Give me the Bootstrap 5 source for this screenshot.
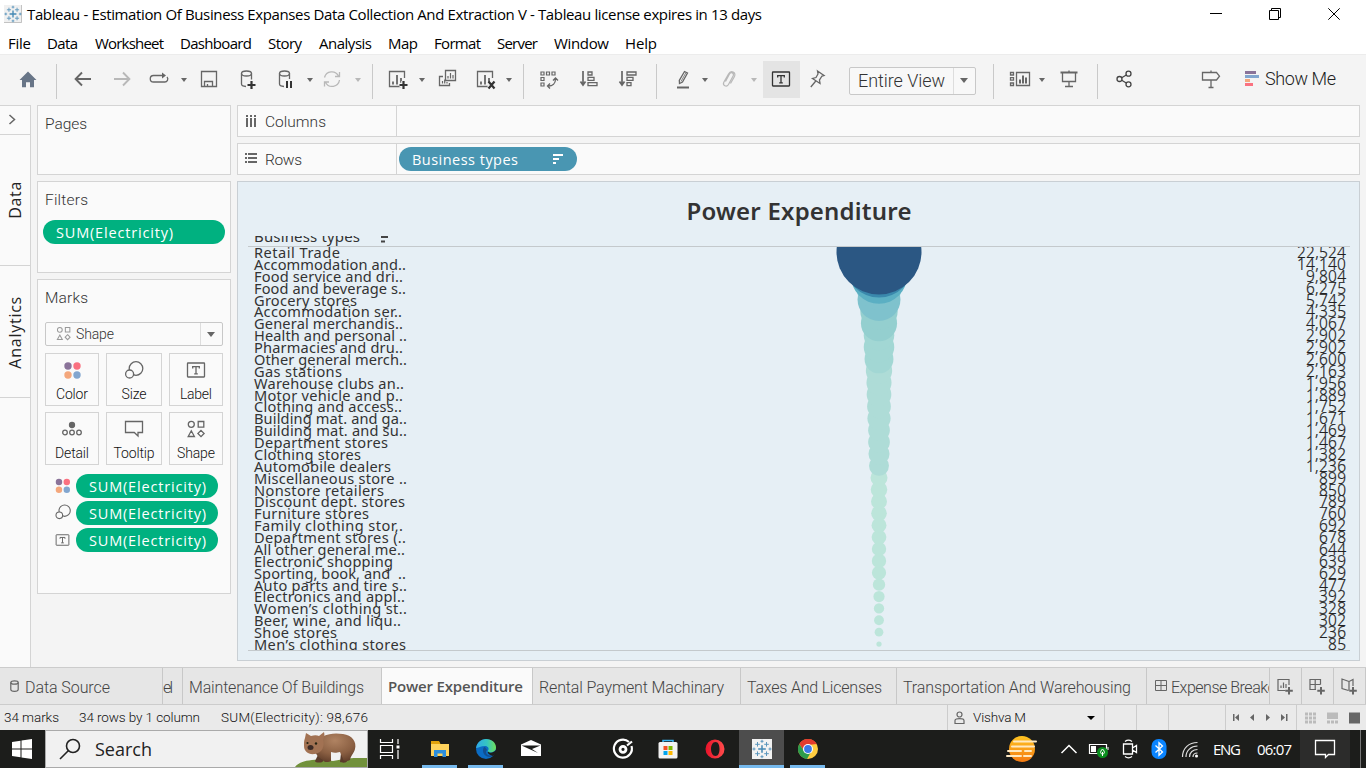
<!DOCTYPE html>
<html lang="en">
<head>
<meta charset="utf-8">
<meta name="viewport" content="width=device-width, initial-scale=1">
<title>Tableau - Power Expenditure</title>
<link href="https://cdn.jsdelivr.net/npm/bootstrap@5.3.0/dist/css/bootstrap.min.css" rel="stylesheet">
<style>
  :root { --line:#d4d4d4; --ink:#555; --ui:Roboto,"Open Sans",sans-serif; --win:"Open Sans","Noto Sans",sans-serif; }
  html, body { height:100%; overflow:hidden; }
  body { width:1366px; height:768px; background:#f4f4f4; font-family:var(--ui); color:#333; font-size:15px; line-height:1; }
  svg { display:block; flex:none; }
  [data-w] { white-space:nowrap; display:inline-block; }
  .ic { width:24px; height:24px; fill:none; stroke:#666; stroke-width:1.3; }
  .ic.off { stroke:#b8b8b8; }
  .caret { width:0; height:0; border:3px solid transparent; border-top:4px solid #666; border-bottom:0; }
  .caret.off { border-top-color:#b8b8b8; }
  .caret.wide { border-width:5px 4px 0; margin-left:6px; }

  .title-bar { height:28px; background:#fff; font:15px/28px var(--win); color:#000; padding:0 26px 0 4px; }
  .title-bar .win-btns { gap:47px; }
  .title-bar .win { width:12px; height:12px; stroke:#000; fill:none; }
  .title-bar .caption-text { margin-left:5px; }
  .menu-bar { height:26px; background:#fff; font:15px/30px var(--win); color:#000; display:grid; padding-left:8px; align-items:center; justify-items:start;
    grid-template-columns:39px 48px 85px 88px 51px 69px 46px 63px 57px 71px 60px; }
  .tools { height:51px; border-top:1px solid #ececec; display:grid; align-items:center; justify-items:end;
    grid-template-columns:40px 17px 38px 39px 37px 16px 34px 39px 37px 16px 31px 17px 12px 36px 16px 34px 38px 15px 12px 37px 40px 39px 17px 38px 13px 33px 16px 43px 29px 147px 18px 37px 14px 36px 17px 38px 87px 113px; }
  .tools > .ic { margin-bottom:2px; }
  .rule { width:1px; height:35px; background:#c9c9c9; margin-top:2px; }
  .toggled { width:37px; height:37px; background:#e4e4e4; margin-bottom:1px; }
  .toggled .ic { stroke:#333; margin:0 1px 1px 0; }
  .fit-box { width:127px; height:28px; border:1px solid #c8c8c8; border-radius:2px; background:#f8f8f8; font-size:18px; color:#333; font-weight:300; margin-top:1px; }
  .fit-box > span:first-child { width:104px; padding-left:8px; border-right:1px solid #ddd; height:100%; line-height:25px; }
  .show-me { font-size:18px; color:#222; font-weight:300; margin-bottom:2px; }

  .work { height:562px; }
  .side-tabs { width:31px; background:#fafafa; border:1px solid var(--line); border-left:0; border-bottom:0; font-family:var(--win); font-size:16px; color:#222; }
  .side-tabs > div { border-bottom:1px solid var(--line); height:132px; }
  .side-tabs > .toggle { height:29px; }
  .side-tabs > .data-tab { height:131px; }
  .side-tabs span { writing-mode:vertical-rl; transform:rotate(180deg); line-height:20px; }
  .panel { background:#fafafa; border:1px solid var(--line); }
  .shelves { width:194px; margin-left:6px; gap:6px; }
  .shelves h2, .shelf h2 { font-size:15.5px; font-weight:300; color:#333; margin:0; line-height:18px; }
  .shelf h2 { padding-top:2px; }
  .shelves h2 { padding:9px 7px 0; }
  .pages { height:70px; } .filters { height:92px; } .marks { height:315px; }
  .pill { height:24px; border-radius:12px; background:#00b180; color:#fff; font-family:var(--win); font-size:14.5px; font-weight:500; line-height:25px; padding-left:13px; }
  .filters .pill { margin:11px 5px 0; }
  .mark-type { height:24px; border:1px solid #c8c8c8; border-radius:2px; margin:15px 7px 0; font-size:14px; font-weight:300; }
  .mark-type > div { width:155px; border-right:1px solid #ddd; }
  .mark-type .ic { width:30px; stroke:#999; }
  .mark-grid { display:grid; grid-template-columns:54px 56px 54px; column-gap:7px; row-gap:6px; margin:7px 7px 0; }
  .mark-grid > div { height:53px; border:1px solid var(--line); font-size:14px; font-weight:300; color:#111; padding-top:4px; }
  .mark-grid [data-w] { margin-top:5px; }
  .encodings { padding:9px 12px 0 13px; gap:3px; }
  .encodings .pill { width:142px; }
  .encodings .ic { margin-right:1px; }
  .canvas-col { width:1123px; margin-left:6px; gap:6px; }
  .shelf { height:32px; }
  .shelf .cap { width:159px; border-right:1px solid var(--line); padding-left:7px; gap:8px; }
  .shelf .pill { background:#4996b2; width:178px; margin-left:2px; margin-top:3px; padding-right:13px; }
  .sheet { height:480px; background:#e6eff5; border-color:#c9cfd4; font-family:"Noto Sans","Open Sans",sans-serif; padding:0 9px 0 10px; }
  .sheet h1 { font-size:24px; font-weight:600; color:#333; height:54px; line-height:58px; margin:0; }
  .field-head { height:11px; overflow:hidden; border-bottom:1px solid #c4c9cc; font-size:15px; padding-left:6px; }
  .field-head span { line-height:16px; margin-top:-8px; }
  .field-head svg { margin-left:20px; }
  .plot { height:404px; overflow:hidden; position:relative; border-bottom:1px solid #c4c9cc; font-size:14.6px; }
  .plot .line { height:11.88px; line-height:11.88px; padding:0 4px 0 6px; white-space:pre; }
  .plot .line span { white-space:pre; }
  .plot .amount { color:#222; font-size:15.500px; font-weight:300; -webkit-text-stroke:.2px #222; }
  .plot svg { position:absolute; left:530.5px; top:0; }

  .tabs { height:38px; background:#e6e6e6; border-top:1px solid #ccc; border-bottom:1px solid #ccc; color:#444; font-weight:300; font-size:16px; }
  .tabs > div { display:flex; align-items:center; border-right:1px solid #c8c8c8; overflow:hidden; padding-left:6px; }
  .tabs > div > span { padding-top:3px; }
  .tabs > .add { width:32px; padding-left:3px; }
  .tabs .on { background:#fafafa; font-weight:600; color:#555; width:151px; font-family:var(--win); font-size:15px; }
  .tabs .on > span { padding-top:0; }
  .t-source { width:163px; } .tabs > .t-source { padding-left:10px; } .t-cut { width:20px; } .tabs > .t-cut { padding-left:0; }
  .t-build { width:199px; } .t-rent { width:208px; } .t-tax { width:156px; } .t-trans { width:250px; } .t-exp { width:123px; } .tabs > .t-exp { padding-left:8px; }
  .status { height:25px; background:#eaeaea; font-size:13.500px; color:#111; font-weight:300; display:grid; grid-template-columns:75px 142px 722px 157px 32px 32px 57px 71px 70px; padding-left:4px; }
  .status { grid-template-columns:75px 142px 726px 157px 32px 32px 57px 71px 70px; }
  .status > div { display:flex; align-items:center; }
  .status .box { border-left:1px solid #ccc; }
  .status .caret { border-width:4px 4px 0; border-top-color:#000; margin-right:9px; }
  .taskbar { height:38px; background:#1c1d1b; color:#fff; font-family:var(--win); font-size:15px; display:grid; justify-items:end; align-items:center;
    grid-template-columns:45px 323px 34px 55px 46px 40px 92px 45px 47px 57px 41px 212px 42px 31px 30px 27px 33px 41px 51px 58px 11px; grid-template-rows:38px; }
  .start { width:45px; padding-left:12px; }
  .taskbar .find { width:323px; height:38px; background:#f1f1f1; border:1px solid #aaa; color:#222; font-size:18px; padding-left:13px; }
  .find span { margin-left:14px; }
  .app { width:35px; height:38px; border-bottom:3px solid #76b9ed; padding-top:9px; }
  .app.active { width:45px; background:#4d4d4d; }
  .notify { width:50px; height:38px; background:#2c2c2b; }
  .peek { width:1px; height:38px; background:#777; }
</style>
</head>
<body>
<svg width="0" height="0" class="position-absolute">
  <defs>
    <g id="dots" stroke="none"><circle cx="8" cy="8" r="3.700" fill="#8a7399"/><circle cx="17" cy="8" r="3.700" fill="#fa7180"/><circle cx="8" cy="17" r="3.700" fill="#f4a77c"/><circle cx="17" cy="17" r="3.700" fill="#82a6cf"/></g>
    <g id="sizes"><circle cx="14" cy="10.500" r="6.800"/><circle cx="7.600" cy="16" r="4" fill="#fafafa"/></g>
    <g id="tbox"><rect x="3.500" y="5" width="17" height="14" rx=".5"/><path d="M8.700 10.400V8.600h6.600v1.800M12 8.600v7.200M10.200 15.800h3.600" stroke-width="1.300"/></g>
    <g id="shapes"><circle cx="7.300" cy="7.300" r="3"/><path d="M14.200 4.500h5.600v5.600h-5.600zM4.200 19.500l3.100-5.700 3.100 5.700zM17 13.400l3.100 3.100-3.100 3.100-3.100-3.100z"/></g>
    <g id="logo" fill="none"><path d="M10 6.200v7.600M6.200 10h7.600" stroke="#4488b4" stroke-width="1.500"/><path d="M5.500 3v4.600M3.200 5.300h4.600M14.500 3v4.600M12.200 5.300h4.600M5.500 12.400V17M3.200 14.700h4.600M14.500 12.400V17M12.200 14.700h4.600M10 .8v3M8.500 2.300h3M10 16.200v3M8.500 17.700h3M2 8.500v3M.5 10h3M18 8.500v3M16.500 10h3" stroke="#5b96bd" stroke-width="1"/></g>
    <g id="bars"><path d="M19.500 11V4.500h-15v15h13"/><path d="M8 17.500v-3M12 17.500V8M16 17.500V11" stroke-width="1.800"/></g>
  </defs>
</svg>

<header>
  <div class="title-bar d-flex align-items-center">
    <svg width="18" height="18" viewBox="0 0 20 20"><rect width="20" height="20" fill="#f0f0f0"/><path d="M0 19.500h19.500V0" stroke="#bbb" fill="none"/><use href="#logo"/></svg>
    <span class="caption-text" data-w="735">Tableau - Estimation Of Business Expanses Data Collection And Extraction V - Tableau license expires in 13 days</span>
    <div class="d-flex ms-auto win-btns">
      <svg class="win" viewBox="0 0 12 12"><path d="M0 5.500h12"/></svg>
      <svg class="win" viewBox="0 0 12 12"><path d="M.5 2.500h9v9h-9zM2.500 2.500v-2h9v9h-2"/></svg>
      <svg class="win" viewBox="0 0 12 12"><path d="M.3.3l11.400 11.400M11.700.3L.3 11.700"/></svg>
    </div>
  </div>
  <nav class="menu-bar">
    <span data-w="23">File</span><span data-w="31">Data</span><span data-w="69">Worksheet</span><span data-w="72">Dashboard</span><span data-w="34">Story</span><span data-w="53">Analysis</span><span data-w="30">Map</span><span data-w="47">Format</span><span data-w="41">Server</span><span data-w="55">Window</span><span data-w="32">Help</span>
  </nav>
  <div class="tools">
    <svg class="ic" viewBox="0 0 24 24"><path d="M12 4.500L20.500 13H18v7.200h-4v-5h-4v5H6V13H3.500z" fill="#687587" stroke="none"/></svg>
    <i class="rule"></i>
    <svg class="ic" viewBox="0 0 24 24"><path d="M20 12H5M11 5.500L4.600 12l6.400 6.500" stroke-width="1.900"/></svg>
    <svg class="ic off" viewBox="0 0 24 24"><path d="M4 12h15M13 5.500l6.400 6.500-6.400 6.500" stroke-width="1.900"/></svg>
    <svg class="ic" viewBox="0 0 24 24"><path d="M16 8.500H6.500a3 3 0 000 6.500h11a3 3 0 002.500-5"/><path d="M15 5.500l4 3-4 3z" fill="#666" stroke="none"/></svg>
    <i class="caret"></i>
    <svg class="ic" viewBox="0 0 24 24"><path d="M4.500 4.500h15v15h-15zM7.500 19.500v-5h8v5M10.500 19v-2"/></svg>
    <svg class="ic" viewBox="0 0 24 24"><ellipse cx="10.500" cy="6.500" rx="5" ry="2.500"/><path d="M5.500 6.500V17c0 1.400 2 2.300 4.500 2.500M15.500 6.500v6"/><path d="M15.500 14v8M11.500 18h8" stroke="#333" stroke-width="2.200"/></svg>
    <svg class="ic" viewBox="0 0 24 24"><ellipse cx="11.500" cy="6.500" rx="5" ry="2.500"/><path d="M6.500 6.500V17c0 1.400 2 2.300 4.500 2.500M16.500 6.500V12"/><path d="M14 14v7M18 14v7" stroke="#333" stroke-width="2"/></svg>
    <i class="caret"></i>
    <svg class="ic off" viewBox="0 0 24 24"><path d="M4.500 10.500a7.500 7.500 0 0114-1.500M19.500 13a7.500 7.500 0 01-14 2.500M19.500 5v4.500H15M4.500 19.500V15H9"/></svg>
    <i class="caret off"></i><i class="rule"></i>
    <svg class="ic" viewBox="0 0 24 24"><use href="#bars"/><path d="M18.500 14v8M14.500 18h8" stroke="#f4f4f4" stroke-width="4.500"/><path d="M18.500 14v8M14.500 18h8" stroke="#333" stroke-width="2.200"/></svg>
    <i class="caret"></i>
    <svg class="ic" viewBox="0 0 24 24"><path d="M10.500 3.500h10v10h-10zM8 9.500H4.500v9h10V16"/><path d="M13 11.500V9M15.500 11.500V6M18 11.500V8M7.500 16.500V14M9.700 16.500v-4M12 16.500V15" stroke-width="1.200"/></svg>
    <svg class="ic" viewBox="0 0 24 24"><use href="#bars"/><path d="M16 15l6 6M22 15l-6 6" stroke="#f4f4f4" stroke-width="5"/><path d="M15.500 14.500l6 7M21.500 14.500l-6 7" stroke="#333" stroke-width="2.200"/></svg>
    <i class="caret"></i><i class="rule"></i>
    <svg class="ic" viewBox="0 0 24 24"><path d="M4 5h3v3H4zM9.500 5h3v3h-3zM15 5h3v3h-3zM4 10.500h3v3H4zM4 16h3v3H4z" stroke-width="1.200"/><path d="M18.500 12c0 4.500-3 7-7 7M16 13.500l2.500-2.500 2.500 2.500M13 16.500L10.500 19l2.500 2.500"/></svg>
    <svg class="ic" viewBox="0 0 24 24"><path d="M6 4v13M3.500 14.500L6 18l2.500-3.500" stroke-width="1.700"/><path d="M11 5h4v3h-4zM11 10.300h6v3h-6zM11 15.600h9v3h-9z"/></svg>
    <svg class="ic" viewBox="0 0 24 24"><path d="M6 4v13M3.500 14.500L6 18l2.500-3.500" stroke-width="1.700"/><path d="M11 5h9v3h-9zM11 10.300h6v3h-6zM11 15.600h4v3h-4z"/></svg>
    <i class="rule"></i>
    <svg class="ic" viewBox="0 0 24 24"><path d="M13.500 4.500l3 1.500-5 9-3 1.500-.2-3z"/><path d="M10 14.500l5-9" stroke-width=".8"/><path d="M6 20.500h12" stroke-width="2"/></svg>
    <i class="caret"></i>
    <svg class="ic off" viewBox="0 0 24 24"><path d="M8.500 14.500l4-7.500c1.600-2.700 5-1 3.600 2l-4.600 8.500c-2 3.300-6.200 1-4.700-2.300L11.500 7c2.500-4.500 8-1.500 6 2.500l-4 7" stroke-width="1.200"/></svg>
    <i class="caret off"></i>
    <div class="toggled d-flex align-items-center justify-content-center"><svg class="ic" viewBox="0 0 24 24"><use href="#tbox"/></svg></div>
    <svg class="ic" viewBox="0 0 24 24"><path d="M12.500 4l6.500 4.500-2 .5-2.500 4 .5 3.500-7.500-5 3.500-1 2-3.500zM10.800 14l-5 6"/></svg>
    <div class="fit-box d-flex align-items-center"><span><span data-w="87">Entire View</span></span><i class="caret wide"></i></div>
    <i class="rule"></i>
    <svg class="ic" viewBox="0 0 24 24"><path d="M9.500 5.500h13v13h-13zM3.500 5.500h3V8h-3zM3.500 10.700h3v2.500h-3zM3.500 16h3v2.500h-3z"/><path d="M13 16.500v-4M16 16.500v-8M19 16.500v-6" stroke-width="2"/></svg>
    <i class="caret"></i>
    <svg class="ic" viewBox="0 0 24 24"><path d="M3.500 5.500h17" stroke-width="2"/><path d="M5.500 6v8.500h13V6M12 3.500V5M12 14.500v5M8 19.500h8"/></svg>
    <i class="rule"></i>
    <svg class="ic" viewBox="0 0 24 24"><g stroke="#444"><circle cx="7.500" cy="12" r="2.500"/><circle cx="16.500" cy="6.700" r="2.500"/><circle cx="16.500" cy="17.300" r="2.500"/><path d="M9.700 10.700l4.600-2.700M9.700 13.300l4.600 2.700"/></g></svg>
    <svg class="ic" viewBox="0 0 24 24"><path d="M3.500 5.500h14l3 3.700-3 3.800h-14zM12 3.500v2M12 13v7.500M9.500 20.500h5"/></svg>
    <div class="show-me d-flex align-items-center"><svg width="20" height="16" viewBox="0 0 20 16"><path fill="#8a7399" d="M0 0h11v3H0z"/><path fill="#82a6cf" d="M0 4h14v3H0z"/><path fill="#f4a77c" d="M0 8h5v3H0z"/><path fill="#fa7180" d="M0 12h8v3H0z"/></svg><span data-w="71">Show Me</span></div>
  </div>
</header>

<main class="work d-flex">
  <aside class="side-tabs d-flex flex-column">
    <div class="toggle"><svg class="ic" viewBox="0 0 24 24"><path d="M9.500 9l5 4.500-5 4.500" stroke-width="1.500"/></svg></div>
    <div class="data-tab d-flex align-items-center justify-content-center"><span data-h="37">Data</span></div>
    <div class="d-flex align-items-center justify-content-center"><span data-h="72">Analytics</span></div>
  </aside>
  <section class="shelves d-flex flex-column">
    <div class="panel pages"><h2><span data-w="42">Pages</span></h2></div>
    <div class="panel filters"><h2><span data-w="43">Filters</span></h2>
      <div class="pill"><span data-w="117">SUM(Electricity)</span></div></div>
    <div class="panel marks"><h2><span data-w="43">Marks</span></h2>
      <div class="mark-type d-flex align-items-center">
        <div class="d-flex align-items-center h-100"><svg class="ic" viewBox="-6 -2 30 24"><use href="#shapes" transform="translate(2 0) scale(.8)"/></svg><span data-w="38">Shape</span></div>
        <i class="caret wide"></i>
      </div>
      <div class="mark-grid text-center">
        <div><svg class="ic mx-auto" viewBox="0 0 24 24"><use href="#dots"/></svg><span data-w="32">Color</span></div>
        <div><svg class="ic mx-auto" viewBox="0 0 24 24"><use href="#sizes"/></svg><span data-w="25">Size</span></div>
        <div><svg class="ic mx-auto" viewBox="0 0 24 24"><use href="#tbox"/></svg><span data-w="32">Label</span></div>
        <div><svg class="ic mx-auto" viewBox="0 0 24 24"><circle cx="12" cy="8" r="2.500" fill="#666"/><circle cx="5" cy="15.500" r="2.300"/><circle cx="12" cy="15.500" r="2.300"/><circle cx="19" cy="15.500" r="2.300"/></svg><span data-w="34">Detail</span></div>
        <div><svg class="ic mx-auto" viewBox="0 0 24 24"><path d="M3.500 4.500h17v11H16V19l-3.700-3.500H3.500z"/></svg><span data-w="41">Tooltip</span></div>
        <div><svg class="ic mx-auto" viewBox="0 0 24 24"><use href="#shapes"/></svg><span data-w="38">Shape</span></div>
      </div>
      <div class="encodings d-flex flex-column">
        <div class="d-flex"><svg class="ic" viewBox="0 0 24 24"><use href="#dots" transform="translate(1 1) scale(.87)"/></svg><div class="pill"><span data-w="117">SUM(Electricity)</span></div></div>
        <div class="d-flex"><svg class="ic" viewBox="0 0 24 24"><use href="#sizes" transform="translate(2 1) scale(.83)"/></svg><div class="pill"><span data-w="117">SUM(Electricity)</span></div></div>
        <div class="d-flex"><svg class="ic" viewBox="0 0 24 24"><use href="#tbox" transform="translate(2.500 3) scale(.75)"/></svg><div class="pill"><span data-w="117">SUM(Electricity)</span></div></div>
      </div>
    </div>
  </section>
  <section class="canvas-col d-flex flex-column">
    <div class="panel shelf d-flex"><div class="cap d-flex align-items-center"><svg width="12" height="13"><path d="M2 3v9M6 3v9M10 3v9M2 0v2M6 0v2M10 0v2" stroke="#666" stroke-width="2"/></svg><h2><span data-w="61">Columns</span></h2></div></div>
    <div class="panel shelf d-flex"><div class="cap d-flex align-items-center"><svg width="12" height="12"><path d="M0 1h2M3 1h9M0 5h2M3 5h9M0 9h2M3 9h9" stroke="#666" stroke-width="2"/></svg><h2><span data-w="37">Rows</span></h2></div>
      <div class="pill d-flex align-items-center justify-content-between"><span data-w="106">Business types</span><svg width="12" height="10"><path d="M1 1h10M1 5h6M1 9h3" stroke="#fff" stroke-width="2"/></svg></div></div>
    <div class="panel sheet">
      <h1 class="text-center"><span data-w="225">Power Expenditure</span></h1>
      <div class="field-head d-flex"><span data-w="106">Business types</span><svg width="10" height="8"><path d="M1 1h7M1 5.500h4" stroke="#444" stroke-width="2"/></svg></div>
      <div class="plot" id="plot"><svg width="200" height="404" id="marks"></svg></div>
    </div>
  </section>
</main>

<footer>
  <div class="tabs d-flex">
    <div class="t-source"><svg width="15" height="13" fill="none" stroke="#666" stroke-width="1.200"><ellipse cx="4.500" cy="2.500" rx="3.700" ry="1.700"/><path d="M.8 2.500v7c0 2.500 7.400 2.500 7.400 0v-7"/></svg><span data-w="85">Data Source</span></div>
    <div class="t-cut"><span data-w="10">el</span></div>
    <div class="t-build"><span data-w="175">Maintenance Of Buildings</span></div>
    <div class="on"><span data-w="135">Power Expenditure</span></div>
    <div class="t-rent"><span data-w="185">Rental Payment Machinary</span></div>
    <div class="t-tax"><span data-w="135">Taxes And Licenses</span></div>
    <div class="t-trans"><span data-w="228">Transportation And Warehousing</span></div>
    <div class="t-exp"><svg width="12" height="12" class="me-1" fill="none" stroke="#666"><path d="M.5.5h11v10H.5zM6 .5v10M.5 5.500h11"/></svg><span data-w="168">Expense Breakdown Data</span></div>
    <div class="add"><svg class="ic" viewBox="0 0 24 24"><path d="M16 11V5.500H5v11h7.500M8 14v-2.500M10.500 14V8.500M13 14v-4" stroke-width="1.200"/><path d="M16 13v7.500M12.300 16.700h7.500" stroke-width="2"/></svg></div>
    <div class="add"><svg class="ic" viewBox="0 0 24 24"><path d="M15.500 10.500v-5H5v10h6M10.200 5.500v10M5 10.500h10.500" stroke-width="1.200"/><path d="M16 13v7.500M12.300 16.700h7.500" stroke-width="2"/></svg></div>
    <div class="add"><svg class="ic" viewBox="0 0 24 24"><path d="M16 12V5.500l-4 2v9M12 7.500L5 5v9.500l6.500 2" stroke-width="1.200"/><path d="M16 13v7.500M12.300 16.700h7.500" stroke-width="2"/></svg></div>
  </div>
  <div class="status">
    <div><span data-w="55">34 marks</span></div><div><span data-w="121">34 rows by 1 column</span></div><div><span data-w="147">SUM(Electricity): 98,676</span></div>
    <div class="box"><svg width="13" height="14" class="ms-1 me-1" viewBox="-1 0 13 14" fill="none" stroke="#666" stroke-width="1.200"><circle cx="6.500" cy="3.500" r="2.500"/><path d="M2 12.500V9.500c0-2.500 9-2.500 9 0v3z"/></svg><span class="ms-1" data-w="53">Vishva M</span><i class="caret ms-auto"></i></div>
    <div class="box"></div><div class="box"></div><div class="box"></div>
    <div class="box"><svg width="70" height="12" viewBox="0 0 70 12" fill="#666"><path d="M7 2h1.500v7H7zM13 2v7L9 5.500zM28 2v7l-4-3.500zM40 2v7l4-3.500zM55 2v7l4-3.500zM60 2h1.500v7H60z"/></svg></div>
    <div class="box"><svg width="66" height="12" viewBox="0 0 66 12"><path d="M8 .5h3v3H8zm4 0h3v3h-3zm4 0h3v3h-3zM8 4.500h3v3H8zm4 0h3v3h-3zm4 0h3v3h-3zM8 8.500h3v3H8zm4 0h3v3h-3zm4 0h3v3h-3zM30 .5h11v6.500H30zM30 8.500h3v3h-3zm4 0h3v3h-3zm4 0h3v3h-3z" fill="#bbb"/><path d="M52 .5h11v11H52z" fill="#666"/></svg></div>
  </div>
  <div class="taskbar">
    <div class="start"><svg width="20" height="20" fill="#fff"><path d="M0 3l8.500-1.300v7.800H0zM9.500 1.500L20 0v9.500H9.500zM0 10.500h8.500v7.800L0 17zM9.500 10.500H20V20L9.500 18.500z"/></svg></div>
    <div class="find d-flex align-items-center">
      <svg width="22" height="22" fill="none" stroke="#222" stroke-width="1.600"><circle cx="14" cy="8" r="6.500"/><path d="M9.500 12.500L1 21"/></svg>
      <span data-w="57">Search</span>
      <svg width="72" height="36" class="ms-auto" viewBox="0 0 72 36">
        <defs><radialGradient id="fur" cx=".5" cy=".25" r=".8"><stop offset="0" stop-color="#b08362"/><stop offset=".6" stop-color="#8a5f42"/><stop offset="1" stop-color="#5d3b28"/></radialGradient></defs>
        <path d="M0 36c4-6 18-9 38-6 18-4 26-3 34-3v9z" fill="#71913b"/>
        <path d="M24 22l-4 8c0 2 8 2 8 0l4-7zM46 22l-1 9c2 1 7 1 7-1l7-10z" fill="#5a3b2a"/>
        <path d="M20 13C25 4 36 1 48 3c9 1 14 8 12 15-1 4-4 6-5 11-3 2-7 1-7-1l-3-7c-4 1-6 1-9 0l0 9c-3 2-8 1-8-1-6-3-10-9-8-16z" fill="url(#fur)"/>
        <path d="M10 7l1-5 5 3c3-1 6-1 8 0l5-4c1 3 0 6-1 8 2 6-1 13-8 14-7 1-11-3-11-8 0-4 0-5 1-8z" fill="#a27253"/>
        <ellipse cx="15.500" cy="16.500" rx="3" ry="2.500" fill="#3c2a25"/><circle cx="12.500" cy="12" r="1.100" fill="#221"/><circle cx="21" cy="12.500" r="1.200" fill="#221"/>
      </svg>
    </div>
    <svg width="24" height="24" fill="none" stroke="#fff" stroke-width="1.200"><path d="M2.500 2v3.500h12V2M2.500 8.500h12v7h-12zM2.500 22v-3.500h12V22M20 2v5M20 13v9"/><path d="M18.500 8.500h3v3h-3z" fill="#fff" stroke="none"/></svg>
    <div class="app"><svg width="20" height="20" class="mx-auto" viewBox="0 0 20 20"><path d="M1 3.500h9V16H1z" fill="#dd9d0b"/><path d="M1 2h8l1.500 3H1z" fill="#e2a20c"/><path d="M1 5h18v12H1z" fill="#ffd35c"/><path d="M4 18v-7h12v7h-3.500v-3.500h-5V18z" fill="#2d8fdd"/></svg></div>
    <div class="app"><svg width="20" height="20" class="mx-auto" viewBox="0 0 20 20">
      <defs><linearGradient id="e1"><stop offset="0" stop-color="#2fa8e8"/><stop offset=".55" stop-color="#35c6c0"/><stop offset="1" stop-color="#6fe05a"/></linearGradient></defs>
      <circle cx="10" cy="10" r="10" fill="#0b6cc4"/><path d="M0 9C1 3.500 5 0 10 0c6 0 10 4 10 8.500 0 3.500-3 5-6 5-2 0-3-1-2-2 1.500-2 0-4.500-3-4.500-4 0-7 2-9 2z" fill="url(#e1)"/><path d="M8 8c-3 5 1 10 6 10l4-2c-6 2-10-2-7-5-1-1-1-3-3-3z" fill="#124f90"/><path d="M12 12.500c2 2 5 1.500 8-1.500l1 3-4 3c-4-1-6-3-5-4.500z" fill="#1c1d1b"/></svg></div>
    <svg width="24" height="24"><path d="M2 7.500L12 3l10 4.500V19H2z" fill="#fff"/><path d="M2.500 8.500h19L13 12l6 4z" fill="#1c1d1b"/></svg>
    <svg width="24" height="24" fill="none" stroke="#fff"><path d="M18 5A9 9 0 1020.500 9" stroke-width="2.200"/><circle cx="12" cy="12.300" r="3" stroke-width="2.800"/><path d="M16 8.500l5-4" stroke-width="2.200"/></svg>
    <svg width="24" height="24"><path d="M7 6V3.500h10V6" stroke="#37b5f0" stroke-width="1.500" fill="none"/><rect x="2.500" y="5" width="19" height="16.500" rx="1.500" fill="#f2f2f2"/><path d="M7.500 9h4v4h-4z" fill="#f25022"/><path d="M12.500 9h4v4h-4z" fill="#7fba00"/><path d="M7.500 14h4v4h-4z" fill="#00a4ef"/><path d="M12.500 14h4v4h-4z" fill="#ffb900"/></svg>
    <svg width="24" height="24"><defs><linearGradient id="op"><stop offset="0" stop-color="#e8132a"/><stop offset="1" stop-color="#ff4b4b"/></linearGradient></defs><path fill-rule="evenodd" fill="url(#op)" d="M12 2.500a9.500 9.500 0 110 19 9.500 9.500 0 010-19zM12.500 5c-3 0-4.500 3.500-4.500 7s1.500 7 4.500 7 4-3.500 4-7-1-7-4-7z"/></svg>
    <div class="app active"><svg width="20" height="20" class="mx-auto" viewBox="0 0 20 20"><path d="M0 0h20v20H0z" fill="#f2f2f2"/><use href="#logo"/></svg></div>
    <div class="app"><svg width="20" height="20" class="mx-auto" viewBox="0 0 20 20"><circle cx="10" cy="10" r="10" fill="#ffcd40"/><path d="M1.300 5A10 10 0 0118.700 5L10 6 6 12z" fill="#e33b2e"/><path d="M1.300 5A10 10 0 009 20l4.500-8L6 12z" fill="#2d9c4c"/><circle cx="10" cy="10" r="5" fill="#fff"/><circle cx="10" cy="10" r="3.900" fill="#3b78e7"/></svg></div>
    <svg width="32" height="28"><defs><linearGradient id="sun" x2="0" y2="1"><stop offset="0" stop-color="#ffc421"/><stop offset="1" stop-color="#f47a12"/></linearGradient></defs><circle cx="17" cy="14" r="13" fill="url(#sun)"/><path d="M9 6.500h22M7 11.500h22M3 16h13M20 16h6M2 21h14M19 21h7" stroke="#ffe9c2" stroke-width="2" stroke-linecap="round"/></svg>
    <svg width="20" height="20" fill="none" stroke="#fff" stroke-width="1.500"><path d="M2.500 14L10 6.500 17.500 14"/></svg>
    <svg width="22" height="22" fill="none" stroke="#fff"><path d="M1.500 6.500h17v9h-17z" stroke-width="1.200"/><path d="M3 8h5v6H3z" fill="#fff" stroke="none"/><path d="M20 9v3"/><circle cx="14.500" cy="14.500" r="5.500" fill="#0a8f1e" stroke="none"/><path d="M14.500 11c3 3 2 5 0 5s-3-2 0-5zM14.500 14v4"/></svg>
    <svg width="22" height="22" fill="none" stroke="#fff" stroke-width="1.300"><path d="M5.500 6h9v10h-9zM14.500 10l4-2.500v7l-4-2.500M7 3.500c2-1.500 5-1.500 7 0M7 18.500c2 1.500 5 1.500 7 0"/></svg>
    <svg width="16" height="20"><rect x=".5" width="15" height="20" rx="7" fill="#0a84ff"/><path d="M4.500 6.500l7 6.500L8 16.300V3.700L11.500 7l-7 6.500" fill="none" stroke="#fff" stroke-width="1.300"/></svg>
    <svg width="20" height="20" fill="none" stroke="#ddd" stroke-width="1.200"><path d="M2.500 18C2.500 9 9 3.500 17.500 3.500M6 18c0-6.500 5-11 11.500-11M9.500 18c0-4.500 3.500-7.500 8-7.500M13 18c0-2.500 2-4 4.500-4"/><circle cx="16.500" cy="17" r="1.500" fill="#fff" stroke="none"/></svg>
    <span data-w="28">ENG</span><span data-w="35">06:07</span>
    <div class="notify d-flex align-items-center justify-content-center"><svg width="22" height="22" fill="none" stroke="#fff" stroke-width="1.300"><path d="M1.500 2.500h19v14h-6l-3 3v-3h-10z"/></svg></div>
    <i class="peek"></i>
  </div>
</footer>

<script src="https://cdn.jsdelivr.net/npm/bootstrap@5.3.0/dist/js/bootstrap.bundle.min.js"></script>
<script>
  // name, electricity, label width
  const rows = [
    ["Retail Trade",22524,86],["Accommodation and..",14140,152],["Food service and dri..",9804,149],["Food and beverage s..",6275,152],
    ["Grocery stores",5742,103],["Accommodation ser..",4335,148],["General merchandis..",4067,149],["Health and personal ..",2902,153],
    ["Pharmacies and dru..",2902,149],["Other general merch..",2600,153],["Gas stations",2163,88],["Warehouse clubs an..",1956,150],
    ["Motor vehicle and p..",1889,149],["Clothing and access..",1752,148],["Building mat. and ga..",1671,153],["Building mat. and su..",1469,153],
    ["Department stores",1467,134],["Clothing stores",1382,107],["Automobile dealers",1236,137],["Miscellaneous store ..",899,153],
    ["Nonstore retailers",850,130],["Discount dept. stores",789,151],["Furniture stores",760,115],["Family clothing stor,.",692,149],
    ["Department stores (..",678,152],["All other general me..",644,151],["Electronic shopping",639,139],["Sporting, book, and  ..",629,152],
    ["Auto parts and tire s..",477,153],["Electronics and appl..",392,151],["Women’s clothing st..",328,153],["Beer, wine, and liqu..",302,147],
    ["Shoe stores",236,83],["Men’s clothing stores",85,152]];
  const steps = [[20000,"#2b5783"],[12000,"#3a88ac"],[8000,"#5bafc3"],[5000,"#7fc2cd"],[3500,"#94cfcf"],[2500,"#a2d7d4"],[1000,"#aedcd7"],[0,"#bce5da"]];
  const pitch = 11.88, plot = document.getElementById("plot");
  let circles = "";
  rows.forEach(([name, value, width], i) => {
    const line = document.createElement("div");
    line.className = "line d-flex justify-content-between";
    line.innerHTML = `<span data-w="${width}">${name}</span><span class="amount" data-w="${value > 9999 ? 49 : value > 999 ? 40 : value > 99 ? 27 : 18}">${value.toLocaleString("en-US")}</span>`;
    plot.append(line);
    const color = steps.find(s => value > s[0])[1];
    circles = `<circle cx="100" cy="${5 + i * pitch}" r="${42.5 * Math.sqrt(value / 22524)}" fill="${color}"/>` + circles;
  });
  document.getElementById("marks").innerHTML = circles;

  // Spread each label's letters over its nominal width.
  document.querySelectorAll("[data-w],[data-h]").forEach(el => {
    const up = el.dataset.h, size = up ? el.offsetHeight : el.getBoundingClientRect().width;
    const gap = ((up || el.dataset.w) - size) / (el.textContent.length - 1);
    el.style.letterSpacing = gap + "px";
    el.style[up ? "marginBottom" : "marginRight"] = -gap + "px";
  });
</script>
</body>
</html>
